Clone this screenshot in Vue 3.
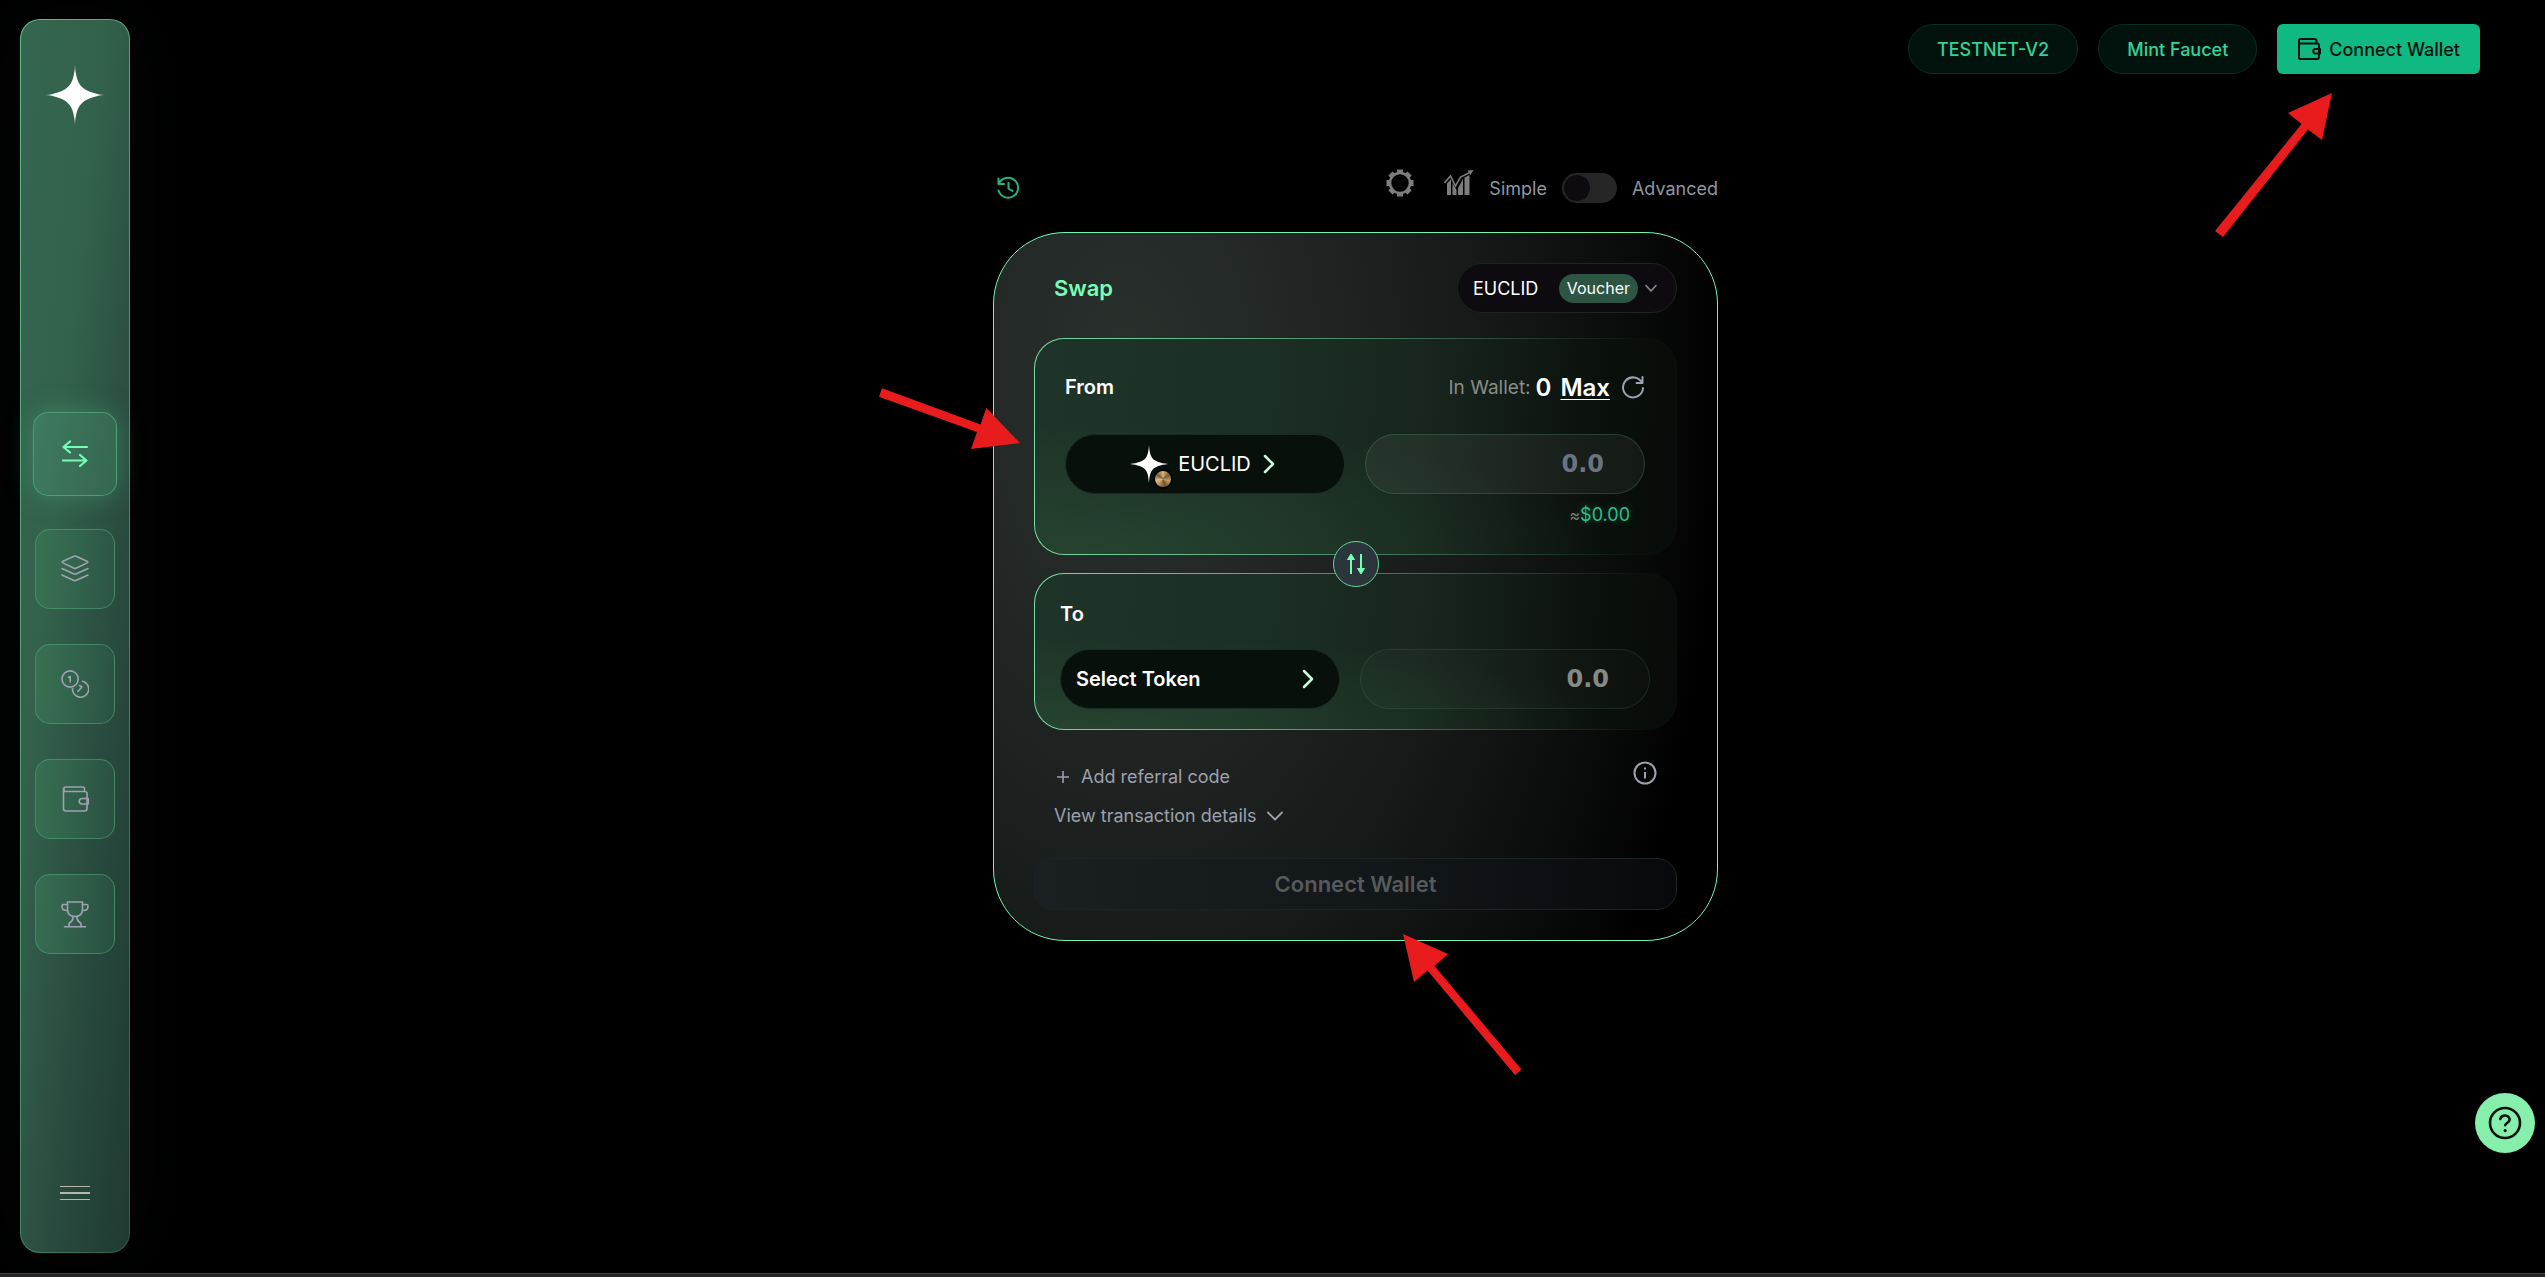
<script setup>
import { ref } from 'vue'

const advanced = ref(false)
const amount = ref('')
const outAmount = ref('0.0')

const navItems = [
  {
    label: 'Swap',
    active: true,
    width: 2.2,
    paths: ['M26 7H2.500M9 1.500L2.500 7L9 12.500', 'M2 20.500H25.500M19 15L25.500 20.500L19 26'],
  },
  {
    label: 'Liquidity',
    width: 1.6,
    paths: [
      'M13 1.300Q14 .8 15 1.300L26 6.300Q27.500 7.100 26 7.900L15 13.200Q14 13.700 13 13.200L2 7.900Q.5 7.100 2 6.300Z',
      'M1 13.500L13 18.900Q14 19.400 15 18.900L27 13.500',
      'M1 20L13 25.500Q14 26 15 25.500L27 20',
    ],
  },
  {
    label: 'Stake',
    width: 1.6,
    paths: [
      'M17.200 9A8.100 8.100 0 1 1 1 9A8.100 8.100 0 1 1 17.200 9Z',
      'M7.500 7.200L9.200 6.500V12',
      'M21.500 11.200A8.100 8.100 0 1 1 11.500 18.500',
      'M16.800 21.500L20.500 17.500M18.500 15.500L20.800 16.700L20.200 17.800',
    ],
  },
  {
    label: 'Wallet',
    width: 1.6,
    paths: [
      'M2.500 3.500V23.500Q2.500 26 5 26H23.500Q26 26 26 23.500V8.500Q26 6.500 23.500 6.500H3V3.500Q3 2 5 2H21.500Q23.500 2 23.500 4V6.500',
      'M27.200 13.500H21A2.700 2.700 0 0 0 21 19H27.200Z',
    ],
  },
  {
    label: 'Rewards',
    width: 1.6,
    paths: [
      'M6.500 2H21.500V9Q21.500 16.500 14 16.500Q6.500 16.500 6.500 9Z',
      'M6.500 4.500H2.500Q.8 4.500 1 7Q1.300 10.800 6.500 10.500',
      'M21.500 4.500H25.500Q27.200 4.500 27 7Q26.700 10.800 21.500 10.500',
      'M12 16.500Q12.500 20.500 8 23.500V26.500M16 16.500Q15.500 20.500 20 23.500V26.500M3.500 26.800H24.500',
    ],
  },
]

const gearTeeth = [0, 45, 90, 135, 180, 225, 270, 315]
</script>

<template>
  <div class="page">
    <div class="shell">
      <aside class="sidebar">
        <a class="logo" href="#" aria-label="Home">
          <svg width="60" height="62" viewBox="0 0 60 62">
            <defs>
              <radialGradient id="logoFade">
                <stop offset="0.7" stop-color="#fff" />
                <stop offset="1" stop-color="#fff" stop-opacity="0.2" />
              </radialGradient>
            </defs>
            <path fill="url(#logoFade)" d="M30 0C31 20 35 28 60 31C35 34 31 42 30 62C29 42 25 34 0 31C25 28 29 20 30 0Z" />
          </svg>
        </a>
        <nav class="nav">
          <a
            v-for="item in navItems"
            :key="item.label"
            href="#"
            class="nav-item"
            :class="{ active: item.active }"
            :aria-label="item.label"
          >
            <svg width="28" height="28" viewBox="0 0 28 28" fill="none" stroke="currentColor" :stroke-width="item.width" stroke-linecap="round" stroke-linejoin="round">
              <path v-for="d in item.paths" :key="d" :d="d" />
            </svg>
          </a>
        </nav>
        <button class="menu" type="button" aria-label="Menu">
          <span></span><span class="thick"></span><span></span>
        </button>
      </aside>

      <main class="main">
        <header class="topbar">
          <button class="pill" type="button">TESTNET-V2</button>
          <button class="pill" type="button">Mint Faucet</button>
          <div class="connect-wrap">
            <button class="connect" type="button">
              <svg width="24" height="24" viewBox="0 0 24 24" fill="none" stroke="currentColor" stroke-width="2" stroke-linejoin="round">
                <path d="M2 4V20.500Q2 22 3.500 22H20Q22 22 22 20V8Q22 6.500 20.500 6.500H2V3.500Q2 2 3.500 2H17.500Q19.500 2 19.500 4V6.500" />
                <path d="M23 12H18.500A2.200 2.200 0 0 0 18.500 16.500H23Z" />
              </svg>
              Connect Wallet
            </button>
            <svg class="arrow arrow-connect" width="118" height="146" viewBox="0 0 118 146">
              <path d="M117 1L107 48L93 37.500L8 145L0 139L86.500 32L73 21Z" />
            </svg>
          </div>
        </header>

        <section class="swap">
          <div class="toolbar">
            <button class="bare history" type="button" aria-label="History">
              <svg width="24" height="24" viewBox="0 0 24 24" fill="none" stroke="currentColor" stroke-width="2" stroke-linecap="round" stroke-linejoin="round">
                <path d="M2.500 2.500V8H8M2.800 8A10 10 0 1 1 2.500 14.500M12.500 7V12.500L16.500 15" />
              </svg>
            </button>
            <div class="tools">
              <button class="bare" type="button" aria-label="Settings">
                <svg width="28" height="28" viewBox="0 0 28 28">
                  <circle cx="14" cy="14" r="10" fill="none" stroke="currentColor" stroke-width="2.600" />
                  <rect v-for="a in gearTeeth" :key="a" x="11" y=".5" width="6" height="4.500" rx=".5" fill="currentColor" :transform="`rotate(${a} 14 14)`" />
                </svg>
              </button>
              <button class="bare" type="button" aria-label="Chart">
                <svg width="30" height="28" viewBox="0 0 30 28" fill="currentColor">
                  <path d="M3 14.500L7 10V26H3ZM8.500 14L12.500 21V26H8.500ZM14 19L19 10V26H14ZM20.500 8.500L25.500 6V26H20.500Z" />
                  <path d="M.5 14L6.500 7L11.500 17L16.500 8L26 3.500" fill="none" stroke="currentColor" stroke-width="1.600" />
                  <path d="M23.500 1.500L29.500 1L26.500 6Z" />
                </svg>
              </button>
            </div>
            <label class="mode" for="mode">Simple</label>
            <input id="mode" v-model="advanced" class="switch" type="checkbox" role="switch" />
            <label class="mode" for="mode">Advanced</label>
          </div>

          <div class="card">
            <div class="card-head">
              <h1>Swap</h1>
              <button class="token-select" type="button" aria-haspopup="listbox">
                <span>EUCLID</span>
                <span class="tag">Voucher</span>
                <svg width="16" height="16" viewBox="0 0 16 16" fill="none" stroke="#8d8b94" stroke-width="1.600" stroke-linecap="round" stroke-linejoin="round"><path d="M3 5.500L8 11L13 5.500" /></svg>
              </button>
            </div>

            <div class="panel from">
              <div class="panel-head">
                <h2>From</h2>
                <div class="balance">
                  <span class="muted">In Wallet:</span>
                  <strong>0</strong>
                  <button class="bare max" type="button">Max</button>
                  <button class="bare refresh" type="button" aria-label="Refresh">
                    <svg width="24" height="24" viewBox="0 0 24 24" fill="none" stroke="currentColor" stroke-width="2" stroke-linecap="round" stroke-linejoin="round">
                      <path d="M21.500 2V8H15.500M21 8A10 10 0 1 0 22 13" />
                    </svg>
                  </button>
                </div>
              </div>
              <div class="panel-row">
                <button class="token" type="button">
                  <span class="token-logo">
                    <svg width="40" height="40" viewBox="0 0 40 40"><path fill="#fff" d="M20 1C21 14 23 18 39 20C23 22 21 26 20 39C19 26 17 22 1 20C17 18 19 14 20 1Z" /></svg>
                    <span class="coin"></span>
                  </span>
                  <span>EUCLID</span>
                  <svg class="chev" width="24" height="24" viewBox="0 0 24 24" fill="none" stroke="currentColor" stroke-width="2.500" stroke-linecap="round" stroke-linejoin="round"><path d="M8 4L16 12L8 20" /></svg>
                </button>
                <input v-model="amount" class="amount" type="text" placeholder="0.0" aria-label="Amount to swap" />
              </div>
              <p class="fiat"><span>≈</span>$0.00</p>
            </div>

            <button class="flip" type="button" aria-label="Switch tokens">
              <svg width="24" height="24" viewBox="0 0 24 24" fill="none" stroke="currentColor" stroke-width="2">
                <path d="M7 22V6M17 2V18" />
                <path d="M7 2L10.500 7.500H3.500ZM17 22L13.500 16.500H20.500Z" fill="currentColor" stroke-width="1" />
              </svg>
            </button>

            <div class="panel to">
              <div class="panel-head"><h2>To</h2></div>
              <div class="panel-row">
                <button class="token pick" type="button">
                  <span>Select Token</span>
                  <svg class="chev" width="24" height="24" viewBox="0 0 24 24" fill="none" stroke="currentColor" stroke-width="2.500" stroke-linecap="round" stroke-linejoin="round"><path d="M8 4L16 12L8 20" /></svg>
                </button>
                <input v-model="outAmount" class="amount out" type="text" readonly aria-label="Amount received" />
              </div>
            </div>

            <div class="extras">
              <div class="links">
                <button class="bare link" type="button">
                  <svg width="18" height="18" viewBox="0 0 18 18" stroke="currentColor" stroke-width="1.600"><path d="M9 3V15M3 9H15" /></svg>
                  Add referral code
                </button>
                <button class="bare link" type="button">
                  View transaction details
                  <svg width="18" height="18" viewBox="0 0 18 18" fill="none" stroke="currentColor" stroke-width="1.800" stroke-linecap="round" stroke-linejoin="round"><path d="M2 5.500L9 12.500L16 5.500" /></svg>
                </button>
              </div>
              <button class="bare info" type="button" aria-label="Info">
                <svg width="24" height="24" viewBox="0 0 24 24" fill="none" stroke="currentColor" stroke-width="2"><circle cx="12" cy="12" r="10.500" /><path d="M12 11V17.500M12 6.500V8.500" /></svg>
              </button>
            </div>

            <button class="submit" type="button" disabled>Connect Wallet</button>

            <svg class="arrow arrow-from" width="142" height="62" viewBox="0 0 142 62">
              <path d="M141 55L92 61L98 44L0 8.700L3 .3L101.500 36.500L107.300 20Z" />
            </svg>
            <svg class="arrow arrow-submit" width="120" height="142" viewBox="0 0 120 142">
              <path d="M0 0L45 20L31.500 32L118.500 135.500L112 141L24.500 36.500L11 48Z" />
            </svg>
          </div>
        </section>
      </main>
    </div>

    <button class="help" type="button" aria-label="Help">
      <svg width="34" height="34" viewBox="0 0 34 34" fill="none" stroke="currentColor" stroke-width="2.600" stroke-linecap="round" stroke-linejoin="round">
        <circle cx="17" cy="17" r="15" />
        <path d="M12.200 13A4.900 4.900 0 0 1 21.700 13.500C21.700 16.500 17.200 17.200 17.200 19.200" />
        <path d="M17.200 24.500V24.600" stroke-width="3.200" />
      </svg>
    </button>
    <div class="edge"></div>
  </div>
</template>

<style>
html,
body {
  background: #000;
}
</style>

<style scoped>
* {
  box-sizing: border-box;
}
.page {
  position: relative;
  display: flex;
  flex-direction: column;
  min-height: 100vh;
  background: #000;
  color: #fff;
  font-family: Inter, "Liberation Sans", sans-serif;
  font-size: 18px;
}
.shell {
  display: flex;
  flex: 1;
}
.edge {
  height: 4px;
  background: #242224;
  border-top: 1px solid #444244;
}
button,
input {
  font: inherit;
  color: inherit;
}
button {
  cursor: pointer;
}
svg {
  display: block;
}
h1,
h2,
p {
  margin: 0;
}
.bare {
  padding: 0;
  border: 0;
  background: none;
}

/* Sidebar */
.sidebar {
  display: flex;
  flex-direction: column;
  align-items: center;
  width: 110px;
  margin: 19px 36px 20px 20px;
  padding: 44px 0 52px;
  border: 1px solid transparent;
  border-radius: 20px;
  background:
    linear-gradient(96deg, #35664f 0%, #33624c 35%, #294a3e 68%, #1f3a32 100%) padding-box,
    linear-gradient(100deg, #5cc08c 0%, #4a9a72 50%, #31594a 100%) border-box;
  box-shadow: 0 0 90px rgba(60, 120, 90, 0.06);
}
.nav {
  display: flex;
  flex: 1;
  flex-direction: column;
  gap: 35px;
  justify-content: center;
  padding-top: 56px;
}
.nav-item {
  display: flex;
  align-items: center;
  justify-content: center;
  width: 80px;
  height: 80px;
  border: 1px solid rgba(84, 178, 128, 0.5);
  border-radius: 15px;
  background: linear-gradient(90deg, rgba(58, 122, 88, 0.6), rgba(50, 100, 78, 0.35));
  color: #9fa3b0;
}
.nav-item.active {
  width: 84px;
  height: 84px;
  margin: -2px;
  background: linear-gradient(100deg, #3e7b60, #356650);
  border-color: rgba(84, 178, 128, 0.7);
  box-shadow: 0 0 24px rgba(74, 160, 118, 0.5);
  color: #74ffb4;
}
.menu {
  display: flex;
  flex-direction: column;
  gap: 5px;
  width: 30px;
  padding: 0;
  border: 0;
  background: none;
}
.menu span {
  height: 1px;
  background: #b4b8ac;
}
.menu .thick {
  height: 2px;
}

/* Top bar */
.main {
  display: flex;
  flex: 1;
  flex-direction: column;
}
.topbar {
  display: flex;
  gap: 20px;
  justify-content: flex-end;
  padding: 24px 65px 0;
}
.pill {
  height: 50px;
  padding: 0 28px;
  border: 1px solid #062e22;
  border-radius: 25px;
  background: #02120d;
  color: #34d399;
  font-weight: 500;
}
.connect-wrap {
  position: relative;
}
.connect {
  display: flex;
  gap: 8px;
  align-items: center;
  height: 50px;
  padding: 0 20px;
  border: 0;
  border-radius: 6px;
  background: #10b981;
  color: #04120d;
  font-weight: 500;
}
.arrow {
  position: absolute;
  fill: #e81c1c;
  pointer-events: none;
}
.arrow-connect {
  top: 68px;
  left: -62px;
}
.arrow-from {
  top: 155px;
  left: -115px;
}
.arrow-submit {
  top: 701px;
  left: 409px;
}

/* Toolbar */
.swap {
  width: 725px;
  max-width: 100%;
  margin: 99px auto 0;
}
.toolbar {
  display: flex;
  align-items: center;
  height: 30px;
  margin-bottom: 29px;
  color: #8f96a3;
}
.history {
  margin: 0 auto 0 3px;
  color: #22b583;
}
.tools {
  display: flex;
  gap: 30px;
  margin-right: 15px;
  padding-bottom: 10px;
  color: #7d7d7d;
}
.switch {
  appearance: none;
  width: 55px;
  height: 30px;
  margin: 0 15px;
  padding: 2px;
  border-radius: 15px;
  background: #262626;
}
.switch::before {
  content: "";
  display: block;
  width: 26px;
  height: 26px;
  border-radius: 50%;
  background: #0d0b10;
}
.switch:checked::before {
  margin-left: 25px;
}

/* Card */
.card {
  position: relative;
  padding: 30px 40px;
  border: 1px solid #74f5ae;
  border-radius: 72px;
  background: radial-gradient(ellipse 600px 1040px at 18% 22%, #2a312d 0%, #232826 25%, #151917 60%, #0a0c0b 84%, #000 100%);
}
.card-head {
  display: flex;
  align-items: center;
  justify-content: space-between;
  margin-bottom: 25px;
  padding-left: 20px;
}
h1,
h2,
.submit {
  font-weight: 600;
}
h1 {
  color: #74ffb4;
  font-size: 22px;
}
h2 {
  font-size: 20px;
  line-height: 30px;
}
.token-select {
  display: flex;
  align-items: center;
  width: 220px;
  height: 50px;
  padding: 0 17px 0 15px;
  border: 1px solid #232125;
  border-radius: 25px;
  background: #0d0a10;
}
.tag {
  margin: 0 5px 0 auto;
  padding: 0 8px;
  border-radius: 15px;
  background: #2c5543;
  font-size: 16px;
  line-height: 29px;
}
.panel {
  border: 1px solid transparent;
  border-radius: 30px;
  background:
    radial-gradient(ellipse 80% 60% at 10% 100%, rgba(52, 104, 66, 0.3), transparent) padding-box,
    linear-gradient(93deg, #1f3428 0%, #1c2f25 35%, #18261d 60%, #111a15 75%, #0a100c 88%, #070b09 100%) padding-box,
    linear-gradient(90deg, #74dfa4 0%, #5aa97e 35%, #3b6b51 60%, #0a0f0c 95%) border-box;
}
.from {
  padding: 33px 31px 27px 30px;
}
.to {
  padding: 25px 26px 20px 25px;
}
.panel-head,
.balance,
.panel-row {
  display: flex;
  align-items: center;
}
.panel-head {
  justify-content: space-between;
  height: 30px;
}
.balance {
  font-size: 19px;
}
.muted {
  color: #878e89;
}
.balance strong,
.max {
  font-size: 24px;
  font-weight: 600;
}
.balance strong {
  margin: 0 9px 0 5px;
}
.max {
  text-decoration: underline;
  text-decoration-thickness: 1px;
  text-underline-offset: 3px;
}
.refresh {
  margin-left: 11px;
  color: #9ca3af;
}
.from .panel-row {
  margin-top: 32px;
}
.to .panel-row {
  margin-top: 20px;
}
.panel-row {
  gap: 20px;
}
.token {
  display: flex;
  align-items: center;
  justify-content: center;
  width: 280px;
  height: 60px;
  border: 1px solid #1a2d23;
  border-radius: 30px;
  background: #08100b;
  font-size: 20px;
}
.token .chev {
  margin-left: 6px;
  color: #c5fbe0;
}
.token-logo {
  position: relative;
  margin-right: 9px;
}
.coin {
  position: absolute;
  right: -4px;
  bottom: -5px;
  width: 20px;
  height: 20px;
  border: 2px solid #030604;
  border-radius: 50%;
  background: conic-gradient(#d9b27c, #7a5c38 15%, #c79c63 30%, #6b5334 45%, #b98e58 60%, #e0bb86 72%, #7a5c38 85%, #d9b27c);
}
.pick {
  justify-content: space-between;
  padding: 0 19px 0 15px;
  font-weight: 600;
}
.amount {
  flex: 1;
  min-width: 0;
  height: 60px;
  padding: 0 40px;
  border: 1px solid rgba(80, 150, 110, 0.3);
  border-radius: 30px;
  outline: 0;
  background: rgba(255, 255, 255, 0.05);
  font-family: "DejaVu Sans", sans-serif;
  font-size: 24px;
  font-weight: 700;
  text-align: right;
}
.amount::placeholder {
  color: #6b7280;
  opacity: 1;
}
.out {
  border-color: rgba(80, 150, 110, 0.18);
  background: rgba(255, 255, 255, 0.02);
  color: #858a86;
}
.fiat {
  margin-top: 9px;
  padding-right: 15px;
  color: #2fbf8a;
  line-height: 24px;
  text-align: right;
  text-shadow: 0 0 8px rgba(47, 191, 138, 0.4);
}
.fiat span {
  color: #7a8380;
  font-size: 16px;
  text-shadow: none;
}
.flip {
  position: relative;
  display: flex;
  align-items: center;
  justify-content: center;
  width: 46px;
  height: 46px;
  margin: -14px auto;
  padding: 0;
  border: 1px solid #62d596;
  border-radius: 50%;
  background: #2a363b;
  color: #74ffb4;
}
.extras {
  display: flex;
  align-items: flex-start;
  justify-content: space-between;
  margin: 31px 20px 30px;
  color: #9ca0ac;
}
.links {
  display: flex;
  flex-direction: column;
  gap: 15px;
  align-items: flex-start;
  padding-top: 4px;
}
.link {
  display: flex;
  gap: 9px;
  align-items: center;
  line-height: 24px;
}
.submit {
  width: 100%;
  height: 52px;
  border: 1px solid #1d2226;
  border-radius: 20px;
  background: linear-gradient(90deg, #1a1f21, #12171a 55%, #08090d);
  color: #555a5c;
  font-size: 22px;
}

/* Help */
.help {
  position: fixed;
  right: 10px;
  bottom: 124px;
  display: flex;
  align-items: center;
  justify-content: center;
  width: 60px;
  height: 60px;
  padding: 0;
  border: 0;
  border-radius: 50%;
  background: #86efac;
  color: #04120a;
}
</style>
